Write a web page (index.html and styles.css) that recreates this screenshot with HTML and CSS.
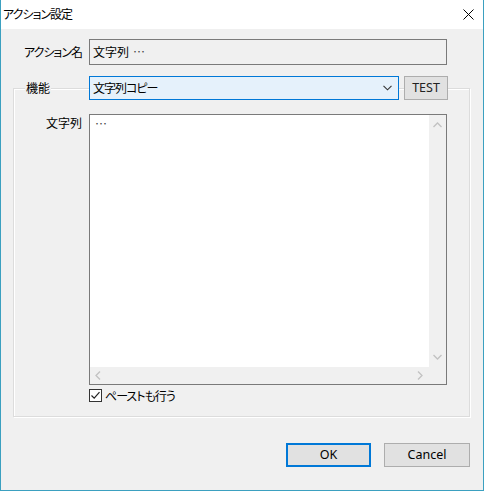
FILE: index.html
```html
<!DOCTYPE html>
<html>
<head>
  <meta charset="UTF-8">
  <meta name="viewport" content="width=device-width, initial-scale=1.0">
  <title>アクション設定</title>
  <link rel="stylesheet" href="styles.css">
</head>
<body>

  <div class="window">
    <div class="titlebar">
      <span class="title kana">アクション設定</span>
      <svg class="close" width="11" height="11" viewBox="0 0 11 11">
        <path d="M0.5 0.5L10.5 10.5M10.5 0.5L0.5 10.5" stroke="#000" stroke-width="1" fill="none" />
      </svg>
    </div>

    <div class="client">
      <div class="field-row">
        <span class="label kana">アクション名</span>
        <div class="textbox readonly">文字列 <span class="ell">…</span></div>
      </div>

      <div class="group">
        <div class="group-head">
          <div class="legend-cell"><span class="legend">機能</span></div>
          <div class="combo">
            <span class="kana">文字列コピー</span>
            <svg width="9" height="6" viewBox="0 0 9 6">
              <path d="M0.5 0.8L4.5 4.8L8.5 0.8" stroke="#333" stroke-width="1.1" fill="none" />
            </svg>
          </div>
          <button class="btn test" type="button">TEST</button>
        </div>

        <div class="memo-row">
          <span class="label">文字列</span>
          <div class="memo">
            <div class="memo-text"><span class="ell">…</span></div>
            <div class="vscroll">
              <svg width="9" height="6" viewBox="0 0 9 6"><path d="M0.5 5L4.5 1L8.5 5" /></svg>
              <svg width="9" height="6" viewBox="0 0 9 6"><path d="M0.5 1L4.5 5L8.5 1" /></svg>
            </div>
            <div class="hscroll">
              <svg width="6" height="9" viewBox="0 0 6 9"><path d="M5 0.5L1 4.5L5 8.5" /></svg>
              <svg width="6" height="9" viewBox="0 0 6 9"><path d="M1 0.5L5 4.5L1 8.5" /></svg>
            </div>
            <div class="corner"></div>
          </div>
        </div>

        <label class="check">
          <span class="box">
            <svg width="11" height="11" viewBox="0 0 11 11">
              <path d="M1.5 5.5L4.2 8.2L9.5 2.2" stroke="#222" stroke-width="1.2" fill="none" />
            </svg>
          </span>
          <span class="kana">ペーストも行う</span>
        </label>
      </div>

      <div class="actions">
        <button class="btn default" type="button">OK</button>
        <button class="btn cancel" type="button">Cancel</button>
      </div>
    </div>
  </div>

</body>
</html>
```

FILE: styles.css
```css
:root {
  font: 12px/16px "Noto Sans CJK JP", sans-serif;
  font-feature-settings: "palt";
  color: #000;
  background: #fff;
}

body {
  margin: 0;
}

.kana {
  letter-spacing: -1px;
}

.window {
  box-sizing: border-box;
  width: 484px;
  height: 491px;
  display: flex;
  flex-direction: column;
  border: 1px solid #3ba0c0;
  border-top: 0;
  background: #f0f0f0;
}

.titlebar {
  flex: 0 0 auto;
  height: 29px;
  padding: 0 9px 0 2px;
  display: flex;
  align-items: center;
  justify-content: space-between;
  background: #fff;
}

  .titlebar .title {
    margin-top: -2px;
  }

.client {
  flex: 1 1 auto;
  display: flex;
  flex-direction: column;
}

.ell {
  font-family: "Noto Sans CJK JP", sans-serif;
  color: #444;
}

.field-row {
  margin-top: 10px;
  display: flex;
  align-items: center;
  gap: 7px;
}

  .field-row .label {
    width: 81px;
    text-align: right;
  }

.textbox {
  box-sizing: border-box;
  width: 358px;
  height: 26px;
  padding: 0 3px;
  display: flex;
  align-items: center;
  gap: 4px;
  border: 1px solid #7a7a7a;
}

.group {
  margin: 23px 13px 0 12px;
  padding-bottom: 14px;
  border: 1px solid #dcdcdc;
  box-shadow: inset 1px 1px 0 #fff, 1px 1px 0 #fff;
}

  .group-head {
    margin-top: -13px;
    height: 24px;
    display: flex;
    align-items: center;
  }

    .legend-cell {
      width: 68px;
      margin-right: 7px;
    }

    .legend {
      margin-left: 11px;
      padding: 0 1px;
      background: #f0f0f0;
    }

  .combo {
    box-sizing: border-box;
    width: 310px;
    height: 24px;
    padding: 0 6px 0 3px;
    display: flex;
    align-items: center;
    justify-content: space-between;
    border: 1px solid #0078d7;
    background: #e5f1fb;
  }

.btn {
  box-sizing: border-box;
  height: 24px;
  padding: 0;
  font: 12.5px/1 "Noto Sans", sans-serif;
  color: #000;
  border: 1px solid #adadad;
  background: #e1e1e1;
}

  .btn.test {
    margin-left: 5px;
    width: 44px;
    color: #222;
  }

  .btn.default {
    width: 85px;
    border: 2px solid #0078d7;
  }

  .btn.cancel {
    width: 86px;
  }

.memo-row {
  margin-top: 14px;
  display: flex;
  align-items: flex-start;
  gap: 7px;
}

  .memo-row .label {
    width: 68px;
    margin-top: 1px;
    text-align: right;
  }

.memo {
  box-sizing: border-box;
  width: 358px;
  height: 271px;
  display: grid;
  grid-template-columns: 1fr 17px;
  grid-template-rows: 1fr 17px;
  border: 1px solid #7a7a7a;
  background: #fff;
}

  .memo-text {
    padding: 1px 5px;
  }

  .memo svg path {
    fill: none;
    stroke: #c2c2c2;
    stroke-width: 1.3;
  }

  .vscroll {
    padding: 7px 0;
    display: flex;
    flex-direction: column;
    align-items: center;
    justify-content: space-between;
    background: #f0f0f0;
  }

  .hscroll {
    padding: 0 6px 0 5px;
    display: flex;
    align-items: center;
    justify-content: space-between;
    background: #f0f0f0;
  }

  .corner {
    background: #f0f0f0;
  }

.check {
  margin: 4px 0 0 75px;
  height: 13px;
  display: flex;
  align-items: center;
  gap: 3px;
}

  .check .box {
    box-sizing: border-box;
    width: 13px;
    height: 13px;
    display: flex;
    border: 1px solid #333;
    background: #fff;
  }

.actions {
  margin-top: auto;
  padding: 0 13px 23px 0;
  display: flex;
  justify-content: flex-end;
  gap: 13px;
}
```
